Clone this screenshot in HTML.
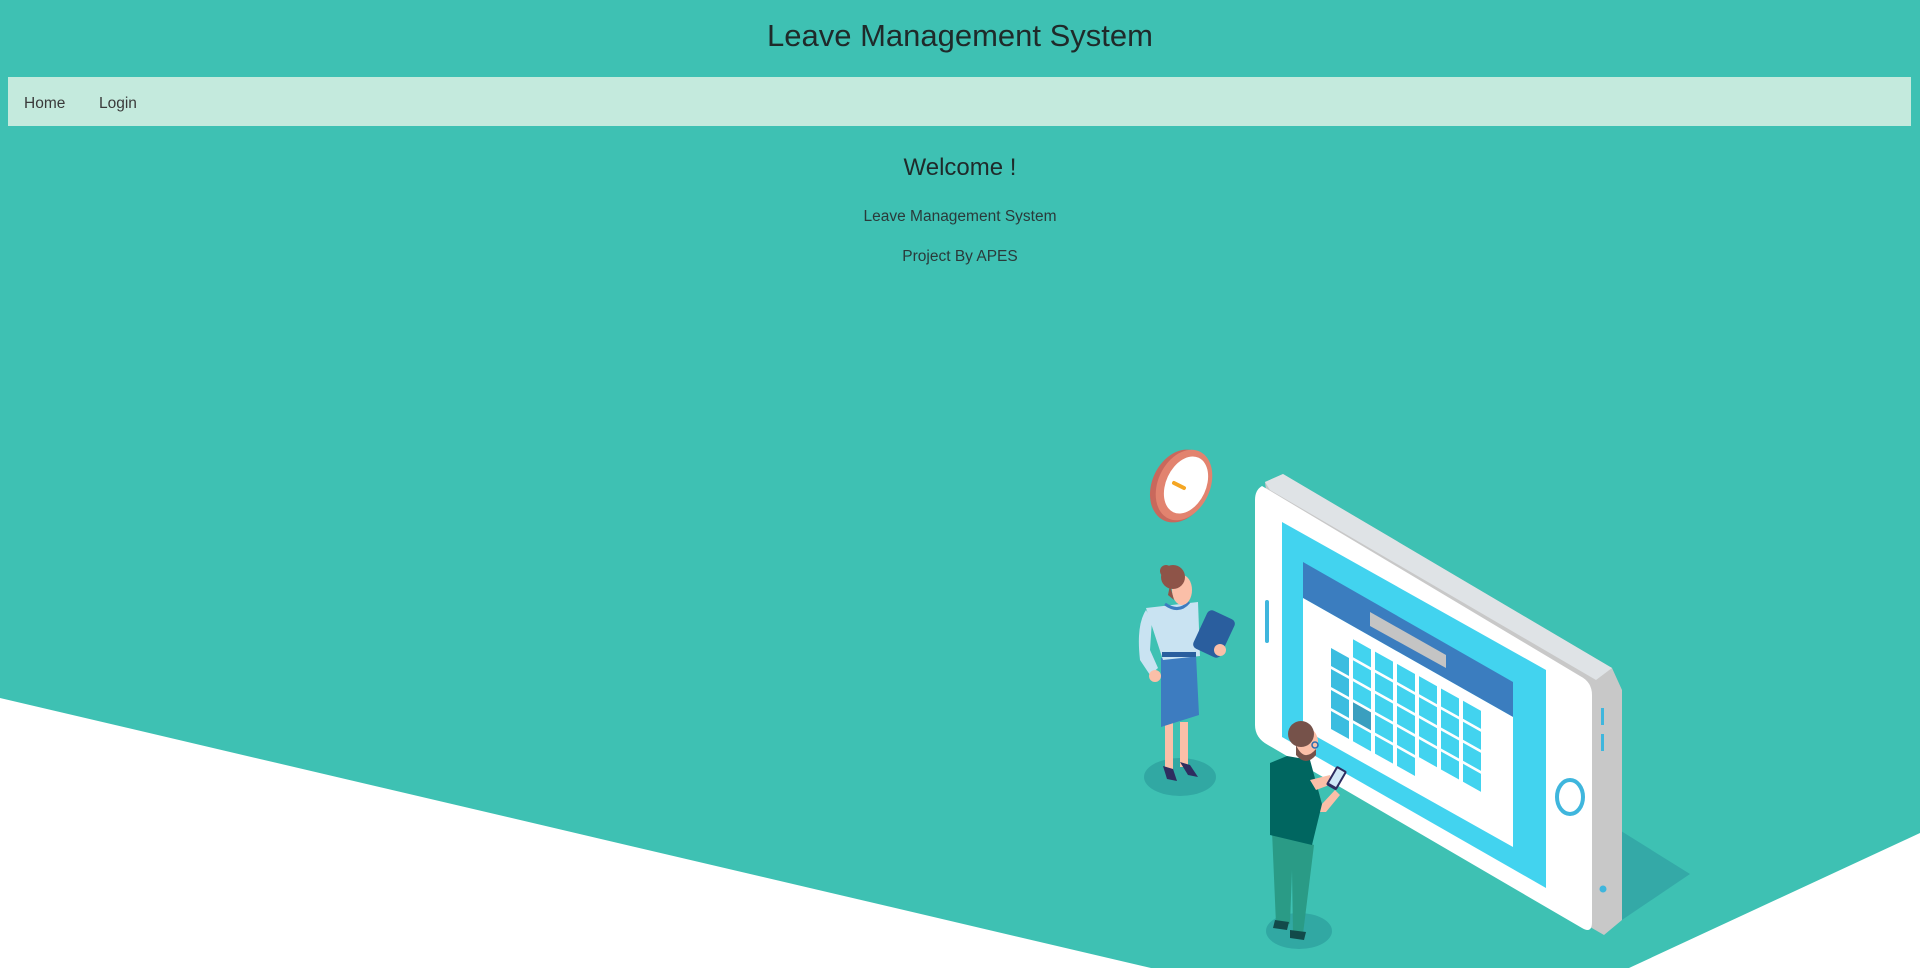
<!DOCTYPE html>
<html><head><meta charset="utf-8"><style>
html,body{margin:0;padding:0;}
body{width:1920px;height:968px;background:#3ec1b3;position:relative;overflow:hidden;font-family:"Segoe UI","Liberation Sans",sans-serif;color:#222;}
h1{position:absolute;top:12px;left:0;width:100%;text-align:center;margin:0;font-weight:300;font-size:31px;line-height:48px;color:#1f2a2a;}
.nav{position:absolute;left:8px;top:77px;width:1903px;height:49px;background:#c4eadd;}
.nav span{position:absolute;top:18px;font-size:15.5px;font-weight:300;color:#3a3a3a;}
.c{position:absolute;left:0;width:100%;text-align:center;font-weight:300;}
svg{position:absolute;left:0;top:0;}
</style></head><body>
<svg width="1920" height="968" viewBox="0 0 1920 968">
<polygon points="0,698 1151,968 0,968" fill="#fff"/>
<polygon points="1920,833 1920,968 1629,968" fill="#fff"/>
<polygon points="1613,826 1690,874 1613,926" fill="#34a9a7"/>
<polygon points="1265,482 1283,474 1612,668 1622,690 1622,920 1604,935 1300,760" fill="#c8c8c8"/>
<polygon points="1265,482 1283,474 1612,668 1596,680 1270,490" fill="#dfe3e6"/>
<path d="M1262,486 Q1255,490 1255,500 L1255,725 Q1255,738 1268,745 L1582,928 Q1592,934 1592,922 L1592,695 Q1592,682 1580,676 Z" fill="#fff"/>
<polygon points="1282,522 1546,670 1546,888 1282,737" fill="#42d3ef"/>
<polygon points="1303,562 1513,682 1513,717 1303,598" fill="#3b7dbf"/>
<polygon points="1303,598 1513,717 1513,847 1303,729" fill="#fff"/>
<polygon points="1370,612 1446,655 1446,668 1370,626" fill="#c4c4c4"/>
<g transform="translate(1331,627) skewY(29.2)" fill="#42d3ef">
<rect x="0" y="21" width="18" height="18" fill="#3bbde0"/><rect x="0" y="42" width="18" height="18" fill="#3bbde0"/><rect x="0" y="63" width="18" height="18" fill="#3bbde0"/><rect x="0" y="84" width="18" height="18" fill="#3bbde0"/>
<rect x="22" y="0" width="18" height="18"/><rect x="22" y="21" width="18" height="18"/><rect x="22" y="42" width="18" height="18"/><rect x="22" y="63" width="18" height="18" fill="#3a9fbf"/><rect x="22" y="84" width="18" height="18"/>
<rect x="44" y="0" width="18" height="18"/><rect x="44" y="21" width="18" height="18"/><rect x="44" y="42" width="18" height="18"/><rect x="44" y="63" width="18" height="18"/><rect x="44" y="84" width="18" height="18"/>
<rect x="66" y="0" width="18" height="18"/><rect x="66" y="21" width="18" height="18"/><rect x="66" y="42" width="18" height="18"/><rect x="66" y="63" width="18" height="18"/><rect x="66" y="84" width="18" height="18"/>
<rect x="88" y="0" width="18" height="18"/><rect x="88" y="21" width="18" height="18"/><rect x="88" y="42" width="18" height="18"/><rect x="88" y="63" width="18" height="18"/>
<rect x="110" y="0" width="18" height="18"/><rect x="110" y="21" width="18" height="18"/><rect x="110" y="42" width="18" height="18"/><rect x="110" y="63" width="18" height="18"/>
<rect x="132" y="0" width="18" height="18"/><rect x="132" y="21" width="18" height="18"/><rect x="132" y="42" width="18" height="18"/><rect x="132" y="63" width="18" height="18"/>
</g>
<ellipse cx="1570" cy="797" rx="13" ry="17" fill="none" stroke="#3fb6dd" stroke-width="4"/>
<rect x="1601" y="708" width="3" height="17" fill="#3fb6dd"/><rect x="1601" y="734" width="3" height="17" fill="#3fb6dd"/>
<rect x="1265" y="600" width="4" height="43" rx="2" fill="#3fb6dd"/>
<circle cx="1603" cy="889" r="3.5" fill="#3fb6dd"/>
<ellipse cx="1180" cy="486" rx="28" ry="38" transform="rotate(25 1180 486)" fill="#c9685c"/>
<ellipse cx="1184" cy="485" rx="26" ry="37" transform="rotate(25 1184 485)" fill="#e2836f"/>
<ellipse cx="1186" cy="485" rx="20" ry="30" transform="rotate(25 1186 485)" fill="#fff"/>
<line x1="1174" y1="483" x2="1184" y2="488" stroke="#f5a623" stroke-width="4" stroke-linecap="round"/>
<ellipse cx="1180" cy="777" rx="36" ry="19" fill="#31a8a3"/>
<rect x="1165" y="722" width="8" height="50" fill="#fbbfa8"/><rect x="1180" y="722" width="8" height="45" fill="#fbbfa8"/>
<path d="M1163,766 l10,3 l4,12 l-10,-2 z" fill="#2e2d60"/><path d="M1180,762 l10,3 l8,12 l-10,-2 z" fill="#2e2d60"/>
<polygon points="1161,658 1196,655 1199,715 1161,727" fill="#3d7cc0"/>
<polygon points="1146,608 1198,602 1200,656 1163,660" fill="#c9e3f2"/>
<path d="M1146,610 Q1136,625 1140,660 L1150,675 L1158,668 L1150,650 L1152,620 Z" fill="#c9e3f2"/>
<circle cx="1155" cy="676" r="6" fill="#fbbfa8"/>
<rect x="1162" y="652" width="34" height="5" fill="#2a5e9e"/>
<path d="M1165,604 q14,10 24,-2" fill="none" stroke="#3d7cc0" stroke-width="3"/>
<ellipse cx="1182" cy="590" rx="10" ry="15" fill="#fbbfa8"/>
<circle cx="1173" cy="577" r="12" fill="#8e5448"/><circle cx="1166" cy="571" r="6" fill="#8e5448"/>
<path d="M1170,585 l4,15 l-6,-5 z" fill="#8e5448"/>
<g transform="rotate(25 1214 634)"><rect x="1199" y="613" width="30" height="42" rx="5" fill="#2a5e9e"/></g>
<circle cx="1220" cy="650" r="6" fill="#fbbfa8"/>
<ellipse cx="1299" cy="931" rx="33" ry="18" fill="#31a8a3"/>
<polygon points="1272,831 1314,845 1303,934 1293,934 1292,870 1290,924 1276,924" fill="#2a9b86"/>
<path d="M1275,920 l14,2 l-2,8 l-14,-2 z" fill="#124a4a"/><path d="M1290,930 l16,2 l-2,8 l-14,-2 z" fill="#124a4a"/>
<path d="M1312,768 L1322,804 L1335,790 L1340,795 L1326,812 L1318,812 Z" fill="#fbbfa8"/>
<polygon points="1270,763 1287,756 1310,760 1322,804 1312,845 1270,835" fill="#006660"/>
<polygon points="1310,780 1330,775 1332,784 1316,790" fill="#fbbfa8"/>
<g transform="rotate(30 1336 779)"><rect x="1330" y="767" width="12" height="22" rx="2" fill="#2e2d60"/><rect x="1332" y="769" width="8" height="17" fill="#cfe8f7"/></g>
<ellipse cx="1307" cy="742" rx="11" ry="14" fill="#fbbfa8"/>
<path d="M1296,745 q8,18 20,4 l0,6 q-10,12 -20,0 z" fill="#76524a"/>
<circle cx="1301" cy="734" r="13" fill="#76524a"/>
<circle cx="1315" cy="745" r="3" fill="none" stroke="#2b6cb0" stroke-width="1.5"/>
</svg>
<h1>Leave Management System</h1>
<div class="nav"><span style="left:16px">Home</span><span style="left:91px">Login</span></div>
<div class="c" style="top:154px;font-size:24px;color:#1f2a2a;">Welcome !</div>
<div class="c" style="top:208px;font-size:15.5px;color:#2a3a3a;">Leave Management System</div>
<div class="c" style="top:248px;font-size:15.5px;color:#2a3a3a;">Project By APES</div>
</body></html>
